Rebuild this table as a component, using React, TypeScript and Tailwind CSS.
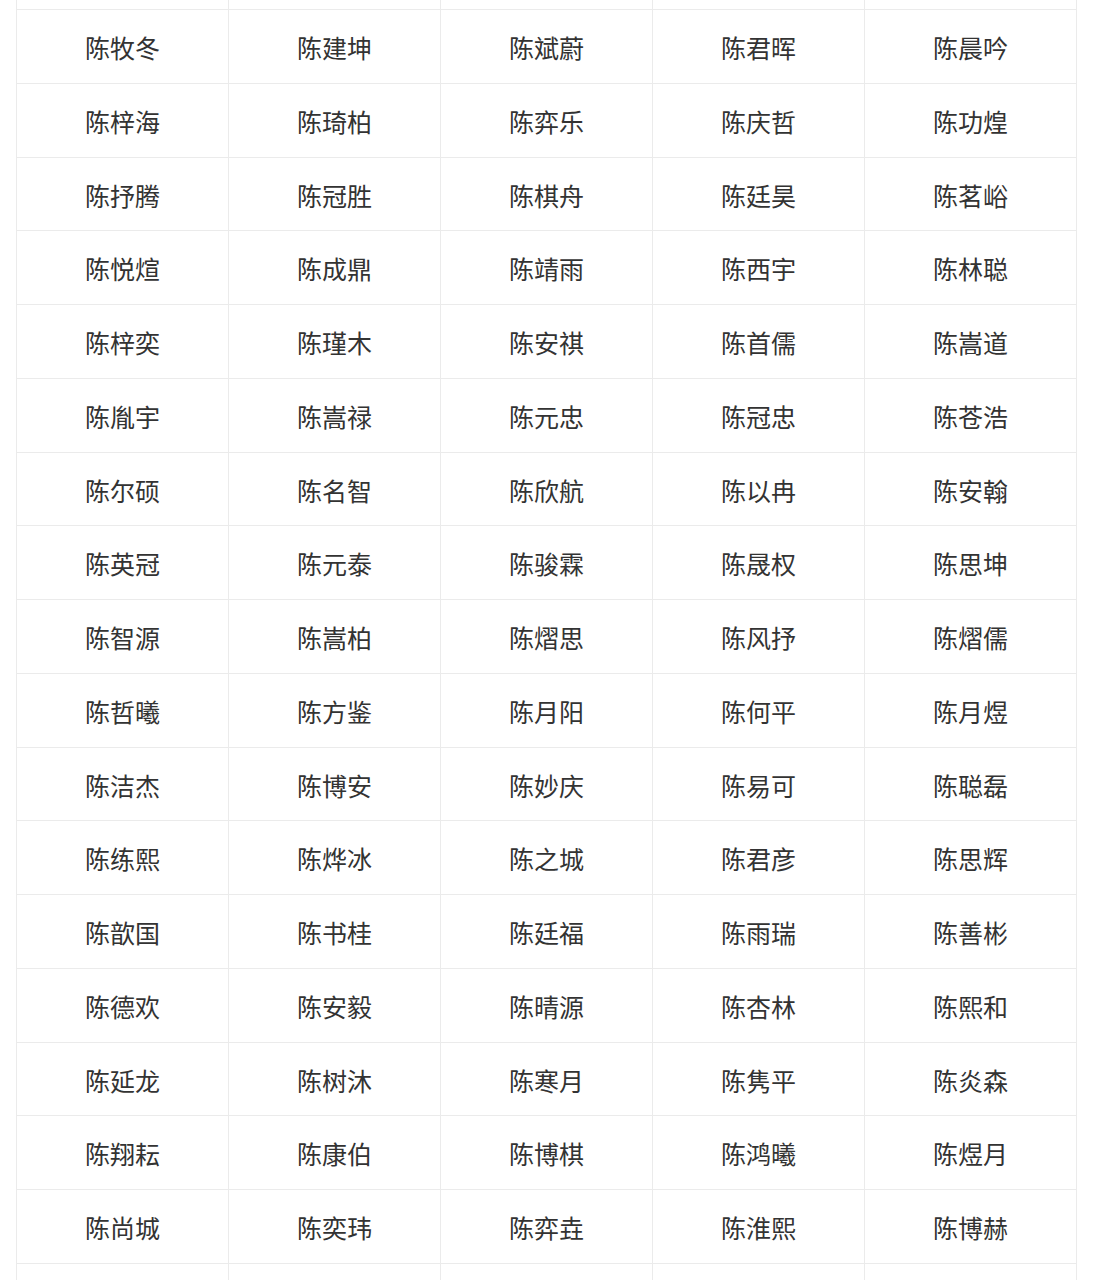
const NAMES: string[][] = [
  ["陈牧冬", "陈建坤", "陈斌蔚", "陈君晖", "陈晨吟"],
  ["陈梓海", "陈琦柏", "陈弈乐", "陈庆哲", "陈功煌"],
  ["陈抒腾", "陈冠胜", "陈棋舟", "陈廷昊", "陈茗峪"],
  ["陈悦煊", "陈成鼎", "陈靖雨", "陈西宇", "陈林聪"],
  ["陈梓奕", "陈瑾木", "陈安祺", "陈首儒", "陈嵩道"],
  ["陈胤宇", "陈嵩禄", "陈元忠", "陈冠忠", "陈苍浩"],
  ["陈尔硕", "陈名智", "陈欣航", "陈以冉", "陈安翰"],
  ["陈英冠", "陈元泰", "陈骏霖", "陈晟权", "陈思坤"],
  ["陈智源", "陈嵩柏", "陈熠思", "陈风抒", "陈熠儒"],
  ["陈哲曦", "陈方鉴", "陈月阳", "陈何平", "陈月煜"],
  ["陈洁杰", "陈博安", "陈妙庆", "陈易可", "陈聪磊"],
  ["陈练熙", "陈烨冰", "陈之城", "陈君彦", "陈思辉"],
  ["陈歆国", "陈书桂", "陈廷福", "陈雨瑞", "陈善彬"],
  ["陈德欢", "陈安毅", "陈晴源", "陈杏林", "陈熙和"],
  ["陈延龙", "陈树沐", "陈寒月", "陈隽平", "陈炎森"],
  ["陈翔耘", "陈康伯", "陈博棋", "陈鸿曦", "陈煜月"],
  ["陈尚城", "陈奕玮", "陈弈垚", "陈淮熙", "陈博赫"],
];

function EmptyRow({ h }: { h: string }) {
  return (
    <div className="grid grid-cols-5">
      {[0, 1, 2, 3, 4].map((i) => (
        <div key={i} className={`${h} border-r border-b border-[#ebebeb]`} />
      ))}
    </div>
  );
}

export default function App() {
  return (
    <div
      className="h-[1280px] w-[1096px] overflow-hidden bg-white"
      style={{ fontFamily: '"Noto Sans CJK SC", "Noto Sans", sans-serif' }}
    >
      <div className="ml-4 w-[1061px] border-l border-[#ebebeb]">
        <EmptyRow h="h-[10px]" />
        {NAMES.map((row, r) => (
          <div key={r} className="grid grid-cols-5">
            {row.map((name, c) => (
              <div
                key={c}
                className="flex h-[73.75px] items-center justify-center border-r border-b border-[#ebebeb] pt-[3px] text-[25px] text-[#333]"
              >
                {name}
              </div>
            ))}
          </div>
        ))}
        <EmptyRow h="h-[60px]" />
      </div>
    </div>
  );
}
